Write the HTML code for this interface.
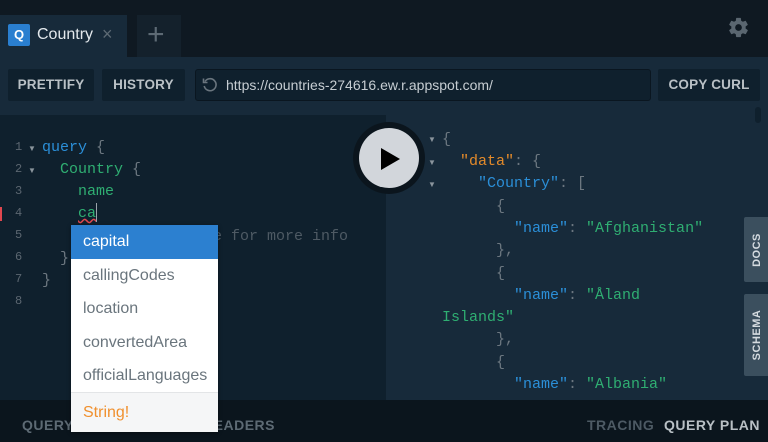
<!DOCTYPE html>
<html><head><meta charset="utf-8"><style>
*{margin:0;padding:0;box-sizing:border-box}
body{width:768px;height:442px;overflow:hidden;background:#0f1922;font-family:"Liberation Sans",sans-serif;position:relative}
.abs{position:absolute}
.btn{position:absolute;top:69px;height:32px;background:#0f202d;border-radius:2px;color:#b9c0c5;font-weight:bold;font-size:13.5px;letter-spacing:.2px;line-height:32px;text-align:center}
.mono{font-family:"Liberation Mono",monospace;font-size:15px;position:absolute;white-space:pre}
.ln{color:#5b6670;font-family:"Liberation Mono",monospace;font-size:12px;position:absolute;left:15px}
.ar{color:#8a949c;font-size:8px;position:absolute}
.g{color:#2fae72}.b{color:#2b8fd8}.o{color:#e38a2a}.p{color:#6c7780}
.ac{position:absolute;left:71px;width:147px;height:34px;color:#6a757d;font-size:16px;line-height:34px;padding-left:12px}
.side{position:absolute;left:744px;width:26px;background:#3b4f5e;border-radius:2px 0 0 2px;color:#d5dbe0;font-size:11px;font-weight:bold;letter-spacing:.5px}
.side span{position:absolute;left:50%;top:50%;transform:translate(-50%,-50%) rotate(-90deg);white-space:nowrap}
.bt{position:absolute;top:417px;font-weight:bold;font-size:14px;letter-spacing:.5px}
</style></head><body>
<div class="abs" style="left:0;top:15px;width:127px;height:42px;background:#172a3a"></div>
<div class="abs" style="left:8px;top:24px;width:22px;height:22px;background:#2a7fd0;border-radius:2px;color:#fff;font-weight:bold;font-size:13px;text-align:center;line-height:22px">Q</div>
<div class="abs" style="left:37px;top:26px;color:#e3e8ec;font-size:16px">Country</div>
<div class="abs" style="left:102px;top:24px;color:#5d6a74;font-size:18px">×</div>
<div class="abs" style="left:137px;top:15px;width:44px;height:42px;background:#14212c"></div>
<div class="abs" style="left:147px;top:18px;color:#5d6a74;font-size:30px;font-weight:300">+</div>
<svg class="abs" style="left:727px;top:16px" width="23" height="23" viewBox="0 0 24 24"><path fill="#5a6670" d="M19.4 13c.04-.33.06-.66.06-1s-.02-.67-.06-1l2.1-1.65c.2-.15.24-.42.12-.64l-2-3.46c-.12-.22-.39-.3-.61-.22l-2.49 1a7.3 7.3 0 0 0-1.69-.98l-.38-2.65A.49.49 0 0 0 14 2h-4c-.25 0-.46.18-.49.42l-.38 2.65c-.61.25-1.17.59-1.69.98l-2.49-1c-.23-.09-.49 0-.61.22l-2 3.46c-.13.22-.07.49.12.64L4.57 11c-.04.33-.07.67-.07 1s.03.67.07 1l-2.11 1.65c-.19.15-.24.42-.12.64l2 3.46c.12.22.39.3.61.22l2.49-1c.52.4 1.08.73 1.69.98l.38 2.65c.03.24.24.42.49.42h4c.25 0 .46-.18.49-.42l.38-2.65c.61-.25 1.17-.59 1.69-.98l2.49 1c.23.09.49 0 .61-.22l2-3.46c.12-.22.07-.49-.12-.64L19.4 13zM12 15.5a3.5 3.5 0 1 1 0-7 3.5 3.5 0 0 1 0 7z"/></svg>
<div class="abs" style="left:0;top:57px;width:768px;height:58px;background:#172a3a"></div>
<div class="btn" style="left:8px;width:86px">PRETTIFY</div>
<div class="btn" style="left:102px;width:83px">HISTORY</div>
<div class="abs" style="left:195px;top:69px;width:456px;height:32px;background:#0f202d;border:1px solid #0a1620;border-radius:3px"></div>
<svg class="abs" style="left:201px;top:76px" width="18" height="18" viewBox="0 0 18 18"><path d="M4 5.5A6 6 0 1 1 3.2 10" fill="none" stroke="#6a757e" stroke-width="1.6"/><path d="M2.5 2.5v4h4" fill="none" stroke="#6a757e" stroke-width="1.6"/></svg>
<div class="abs" style="left:226px;top:77px;color:#c6cdd2;font-size:14px">https://countries-274616.ew.r.appspot.com/</div>
<div class="btn" style="left:658px;width:102px">COPY CURL</div>
<div class="abs" style="left:0;top:115px;width:386px;height:285px;background:#0f202d"></div>
<div class="abs" style="left:386px;top:115px;width:382px;height:285px;background:#172a3a"></div>
<div class="abs" style="left:755px;top:107px;width:6px;height:16px;background:#0f202d;border-radius:3px"></div>
<div class="abs" style="left:0;top:207px;width:2px;height:14px;background:#e0474f"></div>

<div class="ln" style="top:140px">1</div><div class="ar" style="left:28px;top:144px">▼</div>
<div class="ln" style="top:162px">2</div><div class="ar" style="left:28px;top:166px">▼</div>
<div class="ln" style="top:184px">3</div><div class="ln" style="top:206px">4</div>
<div class="ln" style="top:228px">5</div><div class="ln" style="top:250px">6</div>
<div class="ln" style="top:272px">7</div><div class="ln" style="top:294px">8</div>
<div class="mono" style="left:42px;top:139px"><span class="b">query</span> <span class="p">{</span></div>
<div class="mono" style="left:42px;top:161px">  <span class="g">Country</span> <span class="p">{</span></div>
<div class="mono" style="left:42px;top:183px">    <span class="g">name</span></div>
<div class="mono" style="left:42px;top:205px">    <span class="g" style="text-decoration:underline wavy #e0474f">ca</span></div>
<div class="abs" style="left:96px;top:203px;width:1px;height:19px;background:#9aa3aa"></div>
<div class="mono" style="left:42px;top:228px;color:#4e5a64">    # Try Ctrl+Space for more info</div>
<div class="mono" style="left:42px;top:250px">  <span class="p">}</span></div>
<div class="mono" style="left:42px;top:272px"><span class="p">}</span></div>

<div class="abs" style="left:353px;top:122px;width:72px;height:72px;border-radius:50%;background:#0b151d"></div>
<div class="abs" style="left:359px;top:128px;width:60px;height:60px;border-radius:50%;background:#d2d6db"></div>
<div class="abs" style="left:381px;top:148px;width:0;height:0;border-left:19px solid #000;border-top:11px solid transparent;border-bottom:11px solid transparent"></div>

<div class="ar" style="left:428px;top:135px">▼</div>
<div class="ar" style="left:428px;top:158px">▼</div>
<div class="ar" style="left:428px;top:180px">▼</div>
<div class="mono" style="left:442px;top:131px"><span class="p">{</span></div>
<div class="mono" style="left:442px;top:153px">  <span class="o">"data"</span><span class="p">: {</span></div>
<div class="mono" style="left:442px;top:175px">    <span class="b">"Country"</span><span class="p">: [</span></div>
<div class="mono" style="left:442px;top:198px">      <span class="p">{</span></div>
<div class="mono" style="left:442px;top:220px">        <span class="b">"name"</span><span class="p">: </span><span class="g">"Afghanistan"</span></div>
<div class="mono" style="left:442px;top:242px">      <span class="p">},</span></div>
<div class="mono" style="left:442px;top:265px">      <span class="p">{</span></div>
<div class="mono" style="left:442px;top:287px">        <span class="b">"name"</span><span class="p">: </span><span class="g">"Åland</span></div>
<div class="mono" style="left:442px;top:309px"><span class="g">Islands"</span></div>
<div class="mono" style="left:442px;top:331px">      <span class="p">},</span></div>
<div class="mono" style="left:442px;top:354px">      <span class="p">{</span></div>
<div class="mono" style="left:442px;top:376px">        <span class="b">"name"</span><span class="p">: </span><span class="g">"Albania"</span></div>

<div class="side" style="top:217px;height:65px"><span>DOCS</span></div>
<div class="side" style="top:294px;height:82px"><span>SCHEMA</span></div>

<div class="abs" style="left:0;top:400px;width:768px;height:42px;background:#0b151d"></div>
<div class="bt" style="left:22px;color:#5d6a74">QUERY VARIABLES</div>
<div class="bt" style="right:493px;color:#5d6a74">HTTP HEADERS</div>
<div class="bt" style="left:587px;color:#4d5a64">TRACING</div>
<div class="bt" style="left:664px;color:#b9c0c5">QUERY PLAN</div>

<div class="abs" style="left:71px;top:225px;width:147px;height:207px;background:#fff;box-shadow:0 1px 4px rgba(0,0,0,.4)"></div>
<div class="ac" style="top:225px;background:#2c80d0;color:#fff">capital</div>
<div class="ac" style="top:259px">callingCodes</div>
<div class="ac" style="top:292px">location</div>
<div class="ac" style="top:326px">convertedArea</div>
<div class="ac" style="top:359px">officialLanguages</div>
<div class="ac" style="top:392px;height:40px;line-height:40px;background:#f5f6f7;color:#f0902e;border-top:1px solid #e3e5e7">String!</div>
</body></html>
